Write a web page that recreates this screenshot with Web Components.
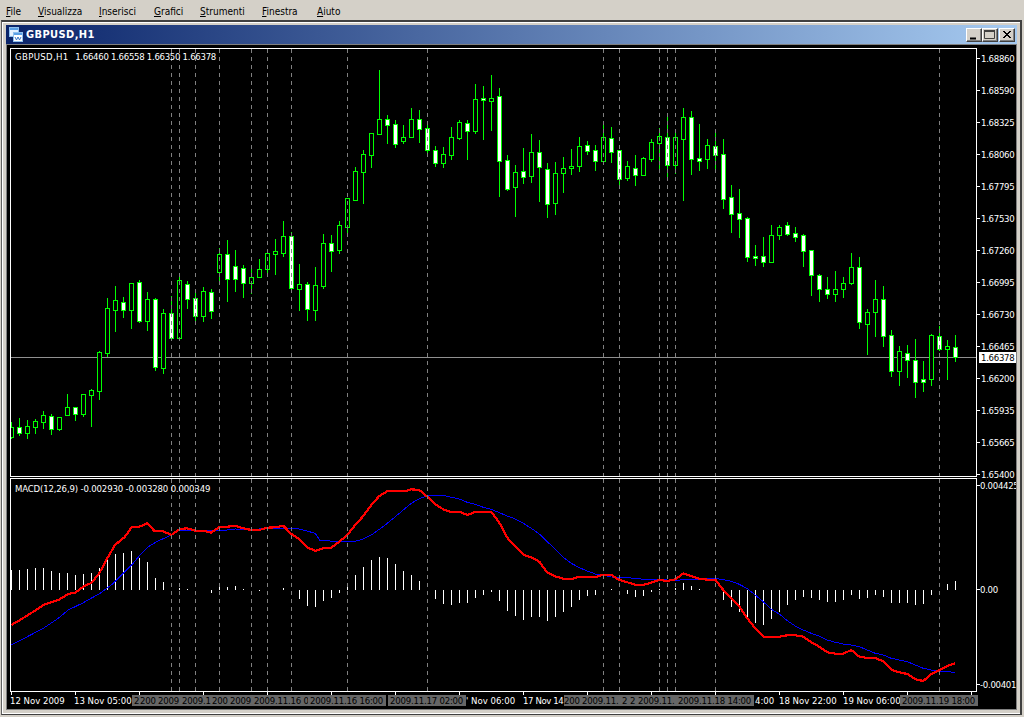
<!DOCTYPE html>
<html lang="it"><head><meta charset="utf-8"><title>GBPUSD,H1</title>
<style>
html,body{margin:0;padding:0;background:#D4D0C8;height:717px;overflow:hidden}
body{font-family:"DejaVu Sans Condensed","DejaVu Sans",sans-serif;font-stretch:condensed}
</style></head>
<body>
<mt-app>
  <mt-menubar>
    <mt-menu-item key="F" rest="ile" w="32"></mt-menu-item>
    <mt-menu-item key="V" rest="isualizza" w="61"></mt-menu-item>
    <mt-menu-item key="I" rest="nserisci" w="55"></mt-menu-item>
    <mt-menu-item key="G" rest="rafici" w="46"></mt-menu-item>
    <mt-menu-item key="S" rest="trumenti" w="62"></mt-menu-item>
    <mt-menu-item key="F" rest="inestra" w="55"></mt-menu-item>
    <mt-menu-item key="A" rest="iuto" w="40"></mt-menu-item>
  </mt-menubar>
  <mt-window caption="GBPUSD,H1"><mt-chart></mt-chart></mt-window>
</mt-app>
<script>
const FONT='"DejaVu Sans Condensed","DejaVu Sans",sans-serif';
customElements.define('mt-app',class extends HTMLElement{constructor(){super();this.attachShadow({mode:'open'}).innerHTML=
`<style>:host{display:flex;flex-direction:column;width:1024px;height:717px;background:#D4D0C8;font-family:${FONT};font-stretch:condensed}</style><slot></slot>`}});

customElements.define('mt-menubar',class extends HTMLElement{constructor(){super();this.attachShadow({mode:'open'}).innerHTML=
`<style>:host{display:flex;height:19px;padding-left:6px;align-items:center;background:#D4D0C8;flex:none}</style><slot></slot>`}});

customElements.define('mt-menu-item',class extends HTMLElement{constructor(){super();this.attachShadow({mode:'open'})}
connectedCallback(){this.shadowRoot.innerHTML=
`<style>:host{display:block;flex:none;width:${this.getAttribute('w')}px;font-size:10px;line-height:14px;color:#000;padding-top:5px}u{text-underline-offset:1px}</style><u>${this.getAttribute('key')}</u>${this.getAttribute('rest')}`}});

customElements.define('mt-caption-button',class extends HTMLElement{constructor(){super();this.attachShadow({mode:'open'})}
connectedCallback(){const k=this.getAttribute('kind');
const g={min:'<path d="M4 10.5h6" stroke="#000" stroke-width="2"/>',
max:'<path d="M2.5 2.5h10v8h-10z" fill="none" stroke="#404040"/><path d="M2 3h11" stroke="#404040" stroke-width="2"/>',
close:'<path d="M4 3l7 7M5 3l7 7M11 3l-7 7M12 3l-7 7" stroke="#000" stroke-width="1"/>'}[k];
this.shadowRoot.innerHTML=`<style>:host{display:block;flex:none;width:16px;height:14px;box-sizing:border-box;background:#D4D0C8;border:1px solid;border-color:#fff #404040 #404040 #fff;box-shadow:inset -1px -1px 0 #808080;position:relative}
svg{display:block;position:absolute;left:-1px;top:-1px}</style><svg width="16" height="14" viewBox="0 0 16 14" aria-hidden="true">${g}</svg>`}});

customElements.define('mt-window',class extends HTMLElement{constructor(){super();this.attachShadow({mode:'open'})}
connectedCallback(){this.shadowRoot.innerHTML=`<style>
:host{display:block;flex:none;box-sizing:border-box;width:1021px;height:695px;margin:1px 0 0 1px;border:1px solid #404040;border-left-color:#606060;border-top-width:2px;border-right-width:2px;background:#fff;padding:1px 0 0 1px}
.face{box-sizing:border-box;height:100%;background:#D4D0C8;padding:2px 3px 3px 3px;display:flex;flex-direction:column;border-bottom:1px solid #fff}
.title{flex:none;height:19px;display:flex;align-items:center;background:linear-gradient(90deg,#0A246A,#A6CAF0);color:#fff;font-weight:bold;font-size:11px;font-stretch:normal;letter-spacing:.4px;padding:0 1px 0 3px;box-sizing:border-box}
.icon{flex:none;width:14px;height:15px;margin-right:3px}
.cap{flex:1;white-space:nowrap}
.btns{display:flex;flex:none;margin-right:1px}
mt-caption-button[kind=close]{margin-left:1px}
.client{flex:1;border:1px solid #808080;background:#000;min-height:0;display:flex}
</style>
<div class="face"><div class="title">
<svg class="icon" viewBox="0 0 14 15" aria-hidden="true">
<rect x=".5" y=".5" width="9" height="9" fill="#e4f1ff" stroke="#8fc0ee"/><rect x="1" y="1" width="8" height="2" fill="#5aa0e6"/>
<rect x="4.5" y="5.5" width="9" height="9" fill="#fff" stroke="#8fc0ee"/><rect x="5" y="6" width="8" height="2" fill="#5aa0e6"/>
<path d="M6 10l1.5 3 1.5-3 1.5 3 1.5-3" fill="none" stroke="#3a78c8"/></svg>
<span class="cap">${this.getAttribute('caption')}</span>
<span class="btns"><mt-caption-button kind="min"></mt-caption-button><mt-caption-button kind="max"></mt-caption-button><mt-caption-button kind="close"></mt-caption-button></span>
</div><div class="client"><slot></slot></div></div>`}});

const CANDLES=`11,422,438,427,437,0 19,418,435,427,433,1 27,420,438,426,433,0 35,419,433,421,427,0 43,411,428,415,422,0 51,414,434,416,429,1 59,417,430,417,429,0 67,394,415,407,415,0 75,407,420,407,414,1 83,394,416,394,414,0 91,389,426,390,395,0 99,351,399,352,391,0 107,298,356,308,353,0 115,286,331,300,310,0 123,297,317,302,310,1 131,283,328,283,310,0 139,280,322,282,321,1 147,292,330,299,321,0 155,298,370,299,367,1 163,309,373,313,368,0 171,296,338,313,338,1 179,277,338,280,338,0 187,281,308,284,299,1 195,289,322,298,316,1 203,287,321,291,316,0 211,289,318,292,311,1 219,248,282,254,272,0 227,240,301,254,279,1 235,250,291,266,279,1 243,265,297,268,283,1 251,268,293,277,283,0 259,259,277,269,277,0 267,253,273,253,269,0 275,239,274,251,254,0 283,221,256,236,253,0 291,232,292,236,288,1 299,264,310,284,289,0 307,282,320,284,309,1 315,267,320,285,310,0 323,234,288,243,286,0 331,235,271,243,251,1 339,221,253,225,250,0 347,198,232,198,227,0 355,167,200,171,200,0 363,150,203,154,172,0 371,133,167,133,155,0 379,70,134,119,134,0 387,115,143,119,125,1 395,120,147,124,144,1 403,125,143,137,141,0 411,108,137,119,137,0 419,110,142,119,129,1 427,125,152,128,150,1 435,146,166,150,163,1 443,147,167,154,163,0 451,127,159,137,155,0 459,120,139,122,138,0 467,120,159,123,131,1 475,84,133,99,131,0 483,86,139,98,100,1 491,75,130,98,101,0 499,88,196,96,161,1 507,155,190,160,189,1 515,165,216,172,187,0 523,148,183,171,177,1 531,134,182,152,176,0 539,140,201,152,167,1 547,163,217,169,204,1 555,162,214,173,203,0 563,157,192,168,173,0 571,149,174,166,168,0 579,137,171,146,166,0 587,141,154,145,151,1 595,145,170,150,161,1 603,125,161,137,161,0 611,127,162,138,152,1 619,150,184,150,179,1 627,161,180,166,178,0 635,155,185,168,175,1 643,157,175,158,175,0 651,139,161,142,159,0 659,128,168,136,143,0 667,117,177,137,165,1 675,133,173,137,165,0 683,108,200,117,139,0 691,111,174,117,159,1 699,124,170,158,161,1 707,139,168,145,159,0 715,133,168,146,155,1 723,139,208,154,199,1 731,185,232,197,214,1 739,189,237,213,219,1 747,217,261,218,257,1 755,245,265,256,258,1 763,237,266,256,262,1 771,225,262,235,262,0 779,225,239,227,235,0 787,222,235,225,234,1 795,227,241,233,237,1 803,234,266,235,251,1 811,250,295,250,275,1 819,274,301,275,289,1 827,277,298,289,294,1 835,271,301,289,294,0 843,277,297,283,289,0 851,253,284,267,283,0 859,257,328,267,322,1 867,309,354,312,324,0 875,280,336,299,312,0 883,286,346,299,336,1 891,330,376,335,371,1 899,346,385,351,371,0 907,345,377,353,360,1 915,339,397,360,382,1 923,361,391,379,382,1 931,334,385,335,379,0 939,326,350,336,349,1 947,340,379,346,349,0 955,335,361,347,357,1`.split(' ').map(s=>s.split(',').map(Number));
const DASHES=[171,179,195,219,251,267,291,347,427,603,619,659,667,675,715,939];
const z=(x0,a)=>{const o=[];for(let i=0;i<a.length;i+=2)o.push((x0+a[i]/3).toFixed(1)+','+(470+a[i+1]/3).toFixed(1));return o};
const RED=[...z(0,[34,465,60,450,100,425,132,404,175,390,205,372,225,368,250,350,275,338,298,310,322,265,345,225,375,200,395,172,418,170,442,160,464,184,490,184,514,195,540,177,562,175,586,182,612,182,634,188,658,171,682,170,706,167,730,175,754,180,778,180,802,173,826,172,850,167,874,192,898,208,922,232,946,243,970,235,994,233]),
...z(340,[0,213,22,195,46,165,70,138,94,105,118,78,145,62,200,62,214,58,238,60,262,80,286,103,310,118,330,125,358,125,382,135,406,126,454,126,478,158,502,203,526,230,550,254,574,262,598,275,622,308,646,319,670,326,700,326,718,320,770,320,790,314,814,315,838,330,862,337,886,344,910,344,934,338,958,330,982,333,1006,328]),
...z(680,[0,318,10,310,34,318,58,326,82,329,106,329,130,360,154,385,178,410,202,445,226,475,250,500,298,500,322,496,346,496,370,500,394,517,418,530,442,547,466,551,490,551,514,540,538,560,562,564,586,564,610,574,634,599,658,607,682,612,706,628,730,633,754,612,778,600,802,588,826,580])];
const BLUE=[...z(0,[34,525,82,500,130,475,175,445,205,420,250,398,300,370,340,340,370,310,395,285,420,255,445,230,470,215,514,195,540,180,586,182,634,183,682,180,706,177,754,178,802,176,874,174,898,177,946,190]),
...z(340,[-60,212,0,214,46,214,70,207,94,195,118,178,142,160,166,140,190,120,214,100,238,86,262,78,286,76,310,76,334,82,358,87,382,97,406,103,430,112,454,118,478,128,502,138,526,147,550,160,574,175,598,192,622,215,646,238,670,262,694,280,718,293,742,303,766,312,790,316,814,321,838,322,862,323,886,325,910,328,958,328,982,330]),
...z(680,[0,330,58,328,106,325,130,329,154,334,178,343,202,356,226,375,250,395,274,418,298,432,322,452,346,468,370,480,394,490,418,498,442,510,466,517,490,522,514,525,538,530,562,540,586,550,610,555,634,565,682,575,706,585,730,595,754,600,778,604,826,607])];
const HIST={11:300,19:300,27:297,35:295,43:295,51:303,59:310,67:310,75:315,83:312,91:310,99:295,107:270,115:252,123:249,131:243,139:265,147:276,155:324,163:336,179:355,187:357,203:361,211:369,219:352,227:350,235:348,243:357,259:362,283:354,299:387,307:407,315:410,323:393,331:384,339:370,347:350,355:315,363:291,371:270,379:261,387:264,395:282,403:303,411:315,419:333,435:387,443:402,451:405,459:399,467:399,475:384,483:375,491:366,499:393,507:423,515:438,523:450,531:441,539:441,547:453,555:441,563:426,571:411,579:390,587:378,595:375,611:357,627:372,635:381,643:378,651:366,659:358,675:355,683:338,691:348,699:357,723:390,731:410,739:426,747:450,755:459,763:465,771:447,779:426,787:405,795:390,803:381,811:384,819:390,827:396,835:396,843:390,851:375,859:387,867:384,875:375,883:381,891:399,899:399,907:399,915:405,923:402,931:375,947:342,955:333};
const PRICES=['1.68860','1.68590','1.68325','1.68060','1.67795','1.67530','1.67260','1.66995','1.66730','1.66465','1.66200','1.65935','1.65665','1.65400'];
// What the date tags of the vertical lines show: each covers the one before it, so only the visible part is written.
const STRIPS=[[132,[[8,'2'],[16,'200'],[24,'2009'],[32,'2009.1'],[16,'200'],[24,'2009'],[56,'2009.11.16 0'],[78,'2009.11.16 16:00']]],
[388,[[78,'2009.11.17 02:00']]],
[564,[[16,'200'],[40,'2009.11.'],[8,'2'],[8,'2'],[40,'2009.11.'],[78,'2009.11.18 14:00']]],
[900,[[78,'2009.11.19 18:00']]]];

customElements.define('mt-chart',class extends HTMLElement{constructor(){super();this.attachShadow({mode:'open'})}
connectedCallback(){
let s='';
s+=`<defs><clipPath id="p1"><rect x="11" y="49" width="965" height="427"/></clipPath><clipPath id="p2"><rect x="11" y="479" width="965" height="212"/></clipPath></defs>`;
s+=`<path d="M11 357.5H976" stroke="#909090"/>`;
s+=`<g clip-path="url(#p1)">`;
for(const [c,wt,wb,bt,bb,w] of CANDLES){
 s+=`<path d="M${c+.5} ${wt}V${wb+1}" stroke="#0f0"/>`;
 s+=`<rect x="${c-1.5}" y="${bt+.5}" width="4" height="${bb-bt}" fill="${w?'#fff':'#000'}" stroke="#0f0"/>`;
}
s+=`</g>`;
s+=`<g clip-path="url(#p2)">`;
for(const k in HIST){const y=470+HIST[k]/3;const t=Math.min(y,590),b=Math.max(y,590);s+=`<path d="M${+k+.5} ${Math.round(t)}V${Math.round(b)}" stroke="#fff"/>`}
s+=`<polyline points="${BLUE.join(' ')}" fill="none" stroke="#00f" stroke-width="1"/>`;
s+=`<polyline points="${RED.join(' ')}" fill="none" stroke="#f00" stroke-width="2.2" stroke-linejoin="round"/>`;
s+=`</g>`;
for(const d of DASHES){s+=`<path d="M${d+.5} 49V476M${d+.5} 479V691" stroke="#808080" stroke-dasharray="4 4"/>`}
s+=`<path d="M10.5 48.5H976.5V476.5H10.5ZM10.5 478.5H976.5V691.5H10.5Z" fill="none" stroke="#fff"/>`;
let lab='';
const L=(t,x,cy,cls='')=>`<span class="l ${cls}" style="left:${x-7}px;top:${cy-6-45}px">${t}</span>`;
PRICES.forEach((p,i)=>{const y=58+32*i;s+=`<path d="M977 ${y+.5}H980" stroke="#fff"/>`;lab+=L(p,981,y+1,'ax')});
s+=`<path d="M977 485.5H980M977 589.5H980M977 684.5H980" stroke="#fff"/>`;
lab+=L('0.004425',980,486,'ax')+L('0.00',980,590,'ax')+L('-0.00401',980,685,'ax');
lab+=L('<span class="sym">GBPUSD,H1</span> <span class="ax">1.66460 1.66558 1.66350 1.66378</span>',15,57);
lab+=L('MACD(12,26,9) -0.002930 -0.003280 0.000349',15,489,'macd');
lab+=L('1.66378',981,357,'price');
for(let x=11;x<=971;x+=64)s+=`<path d="M${x+.5} 692V695" stroke="#fff"/>`;
[["12 Nov 2009",10],["13 Nov 05:00",74],["' Nov 06:00",466],["17 Nov 14",523,'fit'],["4:00",755],["18 Nov 22:00",779],["19 Nov 06:00",843]].forEach(([t,x,c])=>lab+=L(t,x,701,c||''));
for(const [x,segs] of STRIPS){lab+=`<div class="strip" style="left:${x-7}px;top:${695-45}px">`+segs.map(([w,t])=>`<span class="${w==16?'tight':''}" style="width:${w}px">${t}</span>`).join('')+`</div>`}
this.shadowRoot.innerHTML=`<style>
:host{display:block;position:relative;width:1009px;height:661px;background:#000;overflow:hidden;font-family:${FONT};font-stretch:condensed}
svg{position:absolute;left:0;top:0;display:block;shape-rendering:crispEdges}
.l{position:absolute;height:12px;line-height:12px;font-size:9.5px;color:#fff;white-space:nowrap}
.ax{letter-spacing:-.28px}
.fit{letter-spacing:-.4px}
.sym{letter-spacing:.33px;margin-right:4px}
.macd{letter-spacing:-.15px}
.price{background:#fff;color:#000;left:972px!important;width:37px;padding-left:2px;box-sizing:border-box;height:11px;line-height:11px;top:307px!important;letter-spacing:-.28px}
.strip{position:absolute;display:flex;height:11px;background:#666;color:#000;font-size:9.5px;line-height:11px;letter-spacing:-.2px}
.strip span{flex:none;box-sizing:border-box;padding-left:2px;overflow:hidden;white-space:nowrap}
.strip span.tight{padding-left:0}
</style><svg width="1009" height="661" viewBox="7 45 1009 661" aria-hidden="true">${s}</svg>${lab}`;
}});
</script>
</body></html>
